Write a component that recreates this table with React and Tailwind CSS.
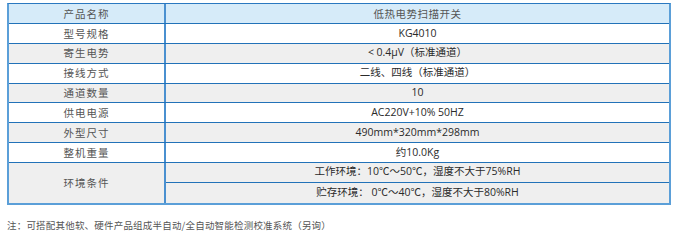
import React from 'react';

const rows = [
  { label: '型号规格', value: 'KG4010', bg: 'bg-white' },
  { label: '寄生电势', value: '< 0.4μV（标准通道）', bg: 'bg-[#efefef]' },
  { label: '接线方式', value: '二线、四线（标准通道）', bg: 'bg-white' },
  { label: '通道数量', value: '10', bg: 'bg-[#efefef]' },
  { label: '供电电源', value: 'AC220V+10% 50HZ', bg: 'bg-white' },
  { label: '外型尺寸', value: '490mm*320mm*298mm', bg: 'bg-[#efefef]' },
  { label: '整机重量', value: '约10.0Kg', bg: 'bg-white' },
];

const labelCls =
  "w-[157px] flex items-center justify-center border-r-2 border-[#4a90d0] text-[10.5px] tracking-[1px] text-[#555] font-['Noto_Sans_CJK_SC',sans-serif]";
const valueCls =
  "flex items-center justify-center text-[10.5px] text-[#2a2a2a] font-['Open_Sans','Noto_Sans_CJK_SC',sans-serif]";

const App = () => {
  return (
    <div className="w-[679px] h-[247px] bg-white pt-[3px] pl-[7px]">
      <div className="w-[664px] border-t border-b-2 border-x-2 border-t-[#2a78c0] border-b-[#5b9fd8] border-x-[#5b9fd8]">
        <div className="flex h-[20px] bg-[#d6ebf9] border-b border-[#2272b8]">
          <div className={labelCls}>产品名称</div>
          <div className="flex-1 flex items-center justify-center text-[10.5px] tracking-[0.5px] text-[#555] font-['Noto_Sans_CJK_SC',sans-serif]">
            低热电势扫描开关
          </div>
        </div>

        {rows.map((row) => (
          <div key={row.label} className={`flex h-[19.85px] border-b border-[#2272b8] ${row.bg}`}>
            <div className={labelCls}>{row.label}</div>
            <div className={`flex-1 ${valueCls}`}>{row.value}</div>
          </div>
        ))}

        <div className="flex h-[39.7px] bg-[#efefef]">
          <div className={labelCls}>环境条件</div>
          <div className="flex-1 flex flex-col">
            <div className={`h-[19.85px] border-b border-[#2272b8] ${valueCls}`}>
              工作环境：10℃～50℃，湿度不大于75%RH
            </div>
            <div className={`flex-1 ${valueCls}`}>
              贮存环境： 0℃～40℃，湿度不大于80%RH
            </div>
          </div>
        </div>
      </div>

      <p className="mt-[13px] text-[9.5px] text-[#555] tracking-[0.2px] font-['Noto_Sans_CJK_SC',sans-serif]">
        注：可搭配其他软、硬件产品组成半自动/全自动智能检测校准系统（另询）
      </p>
    </div>
  );
};

export default App;
